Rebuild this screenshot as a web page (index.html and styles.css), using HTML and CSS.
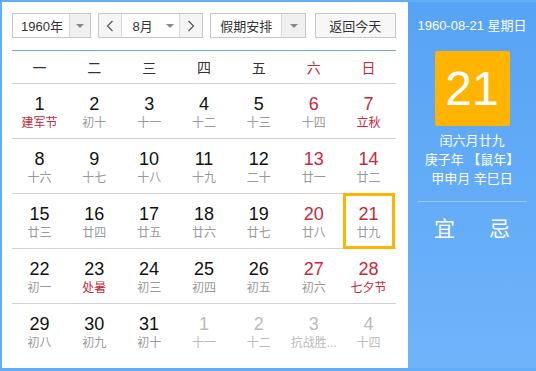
FILE: index.html
```html
<!DOCTYPE html>
<html lang="zh-CN">
<head>
    <meta charset="UTF-8">
    <title>万年历</title>
    <link rel="stylesheet" href="styles.css">
</head>
<body>
    <div class="calendar">
        <div class="main">
            <div class="toolbar">
                <div class="select year">
                    <span class="value">1960年</span>
                    <span class="arrow"><i></i></span>
                </div>
                <div class="month-group">
                    <span class="nav">
                        <svg width="8" height="12" viewBox="0 0 8 12"><path d="M6.5 1 L1.5 6 L6.5 11" fill="none" stroke="#555" stroke-width="1.2"/></svg>
                    </span>
                    <span class="value">8月</span>
                    <span class="arrow plain"><i></i></span>
                    <span class="nav">
                        <svg width="8" height="12" viewBox="0 0 8 12"><path d="M1.5 1 L6.5 6 L1.5 11" fill="none" stroke="#555" stroke-width="1.2"/></svg>
                    </span>
                </div>
                <div class="select holiday">
                    <span class="value">假期安排</span>
                    <span class="arrow"><i></i></span>
                </div>
                <button class="today">返回今天</button>
            </div>

            <div class="weekdays">
                <span>一</span><span>二</span><span>三</span><span>四</span><span>五</span>
                <span class="red">六</span><span class="red">日</span>
            </div>

            <div class="days" id="days"></div>
        </div>

        <div class="side">
            <div class="side-date">1960-08-21 星期日</div>
            <div class="big-day">21</div>
            <div class="lunar-info">
                <div>闰六月廿九</div>
                <div>庚子年 【鼠年】</div>
                <div>甲申月 辛巳日</div>
            </div>
            <div class="yiji">
                <span>宜</span><span>忌</span>
            </div>
        </div>
    </div>

    <script>
        // [日期, 农历/节日, 类型]
        const days = [
            ["1", "建军节", "fest"], ["2", "初十"], ["3", "十一"], ["4", "十二"], ["5", "十三"], ["6", "十四", "we"], ["7", "立秋", "we fest"],
            ["8", "十六"], ["9", "十七"], ["10", "十八"], ["11", "十九"], ["12", "二十"], ["13", "廿一", "we"], ["14", "廿二", "we"],
            ["15", "廿三"], ["16", "廿四"], ["17", "廿五"], ["18", "廿六"], ["19", "廿七"], ["20", "廿八", "we"], ["21", "廿九", "we selected"],
            ["22", "初一"], ["23", "处暑", "fest"], ["24", "初三"], ["25", "初四"], ["26", "初五"], ["27", "初六", "we"], ["28", "七夕节", "we fest"],
            ["29", "初八"], ["30", "初九"], ["31", "初十"], ["1", "十一", "other"], ["2", "十二", "other"], ["3", "抗战胜...", "other"], ["4", "十四", "other"]
        ];

        const html = days.map(d => `
            <div class="day ${d[2] || ""}">
                <div class="num">${d[0]}</div>
                <div class="lunar">${d[1]}</div>
            </div>`).join("");
        document.getElementById("days").innerHTML = html;
    </script>
</body>
</html>
```

FILE: styles.css
```css
:root {
    --font: "Liberation Sans", Arial, "Noto Sans CJK SC", sans-serif;
    --blue: #5aa4f3;
    --orange: #ffb400;
    --red: #c9283a;
    --gray: #999;
    --line: #d2d2d2;
}
html, body {
    margin: 0;
    padding: 0;
}
body {
    font-family: var(--font);
    width: 536px;
    height: 371px;
    overflow: hidden;
}
.calendar {
    display: flex;
    width: 536px;
    height: 371px;
    box-sizing: border-box;
    padding: 2px 0 3px 2px;
    background: #63acf6;
}
.main {
    width: 406px;
    background: #fff;
    padding: 11px 12px 0 10px;
    box-sizing: border-box;
}
.toolbar {
    display: flex;
    align-items: center;
    height: 25px;
    padding-bottom: 12px;
    border-bottom: 1px solid #6aaee6;
    font-size: 13px;
    color: #333;
}
.select, .month-group, .today {
    display: flex;
    height: 25px;
    box-sizing: border-box;
    border: 1px solid #c8c8c8;
    background: #fff;
}
.select .value, .month-group .value {
    display: flex;
    align-items: center;
}
.year {
    width: 80px;
}
.year .value {
    width: 54px;
    justify-content: center;
    padding-left: 2px;
}
.arrow {
    flex: 1;
    display: flex;
    align-items: center;
    justify-content: center;
    background: #f0f0f0;
    border-left: 1px solid #d8d8d8;
}
.arrow.plain {
    background: #fff;
    border-left: none;
    flex: none;
    width: 18px;
}
.arrow i {
    width: 0;
    height: 0;
    border-left: 4px solid transparent;
    border-right: 4px solid transparent;
    border-top: 4px solid #888;
}
.month-group {
    margin-left: 7px;
    width: 105px;
}
.month-group .value {
    width: 40px;
    padding-left: 10px;
    box-sizing: border-box;
}
.nav {
    width: 23px;
    display: flex;
    align-items: center;
    justify-content: center;
    background: #f5f5f5;
}
.nav:first-child {
    border-right: 1px solid #d8d8d8;
}
.nav:last-child {
    border-left: 1px solid #d8d8d8;
}
.holiday {
    margin-left: 7px;
    width: 96px;
}
.holiday .value {
    width: 70px;
    justify-content: center;
}
.today {
    margin-left: 9px;
    width: 82px;
    align-items: center;
    justify-content: center;
    background: #f7f7f7;
    font-family: var(--font);
    font-size: 13px;
    color: #333;
    padding: 0;
}
.weekdays {
    display: grid;
    grid-template-columns: repeat(7, 1fr);
    height: 32px;
    align-items: center;
    text-align: center;
    font-size: 14px;
    color: #333;
    border-bottom: 1px solid var(--line);
}
.weekdays .red {
    color: var(--red);
}
.days {
    display: grid;
    grid-template-columns: repeat(7, 1fr);
    grid-auto-rows: 55px;
}
.day {
    position: relative;
    text-align: center;
    padding-top: 10px;
    box-sizing: border-box;
    border-bottom: 1px solid var(--line);
}
.day:nth-last-child(-n+7) {
    border-bottom: none;
}
.num {
    font-size: 18px;
    line-height: 20px;
    color: #111;
}
.lunar {
    font-size: 12px;
    line-height: 18px;
    color: var(--gray);
}
.we .num, .fest .lunar {
    color: var(--red);
}
.other .num, .other .lunar {
    color: #bbb;
}
.selected::after {
    content: "";
    position: absolute;
    top: -1px;
    bottom: -1px;
    left: 2px;
    right: 1px;
    border: 3px solid var(--orange);
}
.side {
    flex: 1;
    display: flex;
    flex-direction: column;
    align-items: center;
    background: linear-gradient(#57a3f4, #6fb4fb);
    color: #fff;
}
.side-date {
    margin-top: 15px;
    font-size: 13px;
    line-height: 18px;
}
.big-day {
    margin-top: 16px;
    width: 75px;
    height: 75px;
    background: var(--orange);
    font-size: 48px;
    line-height: 75px;
    text-align: center;
    border-radius: 2px;
}
.lunar-info {
    margin-top: 5px;
    font-size: 13px;
    line-height: 19px;
    text-align: center;
}
.yiji {
    margin-top: 13px;
    width: 109px;
    padding-top: 10px;
    border-top: 1px solid #9ccbfa;
    display: flex;
    justify-content: center;
    gap: 34px;
    font-size: 21px;
}
```
